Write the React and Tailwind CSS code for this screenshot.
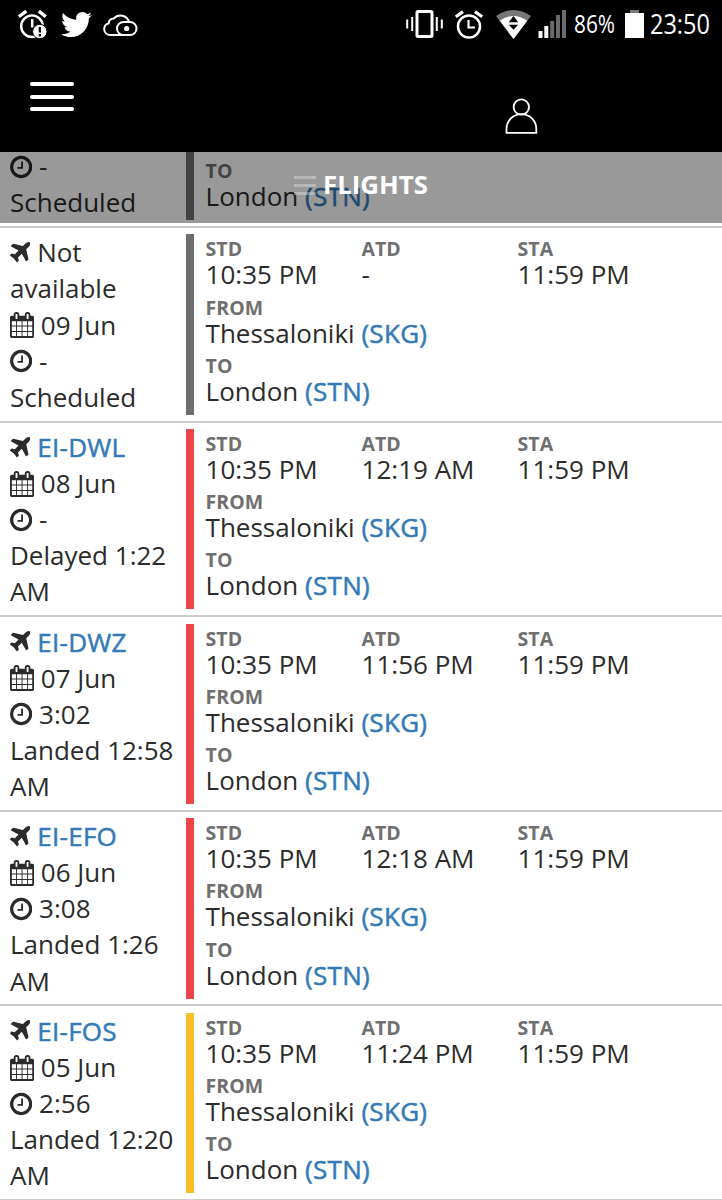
import React from 'react';
import { FaTwitter } from 'react-icons/fa';

const flights = [
  { id: 2, date: '09 Jun', duration: '-', status: 'Scheduled', std: '10:35 PM', atd: '-', sta: '11:59 PM', bar: 'bg-[#6d6d6d]' },
  { id: 3, plane: 'EI-DWL', date: '08 Jun', duration: '-', status: 'Delayed 1:22 AM', std: '10:35 PM', atd: '12:19 AM', sta: '11:59 PM', bar: 'bg-[#ee4647]' },
  { id: 4, plane: 'EI-DWZ', date: '07 Jun', duration: '3:02', status: 'Landed 12:58 AM', std: '10:35 PM', atd: '11:56 PM', sta: '11:59 PM', bar: 'bg-[#ee4647]' },
  { id: 5, plane: 'EI-EFO', date: '06 Jun', duration: '3:08', status: 'Landed 1:26 AM', std: '10:35 PM', atd: '12:18 AM', sta: '11:59 PM', bar: 'bg-[#ee4647]' },
  { id: 6, plane: 'EI-FOS', date: '05 Jun', duration: '2:56', status: 'Landed 12:20 AM', std: '10:35 PM', atd: '11:24 PM', sta: '11:59 PM', bar: 'bg-[#f7bf26]' },
];

const PlaneIcon = () => (
  <svg className="inline h-[26px] w-[20.4px] align-[-3.7px]" viewBox="192 0 1408 1792" fill="currentColor">
    <path d="M1568 160q44 52 12 148t-108 172l-161 161 160 696q5 19-12 33l-128 96q-7 6-19 6-4 0-7-1-15-3-21-16l-279-508-259 259 53 194q5 17-8 31l-96 96q-9 9-23 9h-2q-15-2-24-13l-189-252-252-189q-11-7-13-23-1-13 9-25l96-97q9-9 23-9 6 0 8 1l194 53 259-259-508-279q-14-8-17-24-2-16 9-27l128-128q14-13 30-8l665 159 160-160q76-76 172-108t148 12z" />
  </svg>
);

const CalendarIcon = () => (
  <svg className="inline h-[26px] w-[24.1px] align-[-3.7px]" viewBox="64 0 1664 1792" fill="currentColor">
    <path d="M192 1664h288v-288h-288v288zm352 0h320v-288h-320v288zm-352-352h288v-320h-288v320zm352 0h320v-320h-320v320zm-352-384h288v-288h-288v288zm736 736h320v-288h-320v288zm-384-736h320v-288h-320v288zm768 736h288v-288h-288v288zm-384-352h320v-320h-320v320zm-352-864v-288q0-13-9.5-22.5t-22.5-9.5h-64q-13 0-22.5 9.5t-9.5 22.5v288q0 13 9.5 22.5t22.5 9.5h64q13 0 22.5-9.5t9.5-22.5zm736 864h288v-320h-288v320zm-384-384h320v-288h-320v288zm384 0h288v-288h-288v288zm32-480v-288q0-13-9.5-22.5t-22.5-9.5h-64q-13 0-22.5 9.5t-9.5 22.5v288q0 13 9.5 22.5t22.5 9.5h64q13 0 22.5-9.5t9.5-22.5zm384-64v1280q0 52-38 90t-90 38h-1408q-52 0-90-38t-38-90v-1280q0-52 38-90t90-38h128v-96q0-66 47-113t113-47h64q66 0 113 47t47 113v96h384v-96q0-66 47-113t113-47h64q66 0 113 47t47 113v96h128q52 0 90 38t38 90z" />
  </svg>
);

const ClockIcon = () => (
  <svg className="inline h-[26px] w-[22.3px] align-[-3.7px]" viewBox="128 0 1536 1792" fill="currentColor">
    <path d="M1024 544v448q0 14-9 23t-23 9h-320q-14 0-23-9t-9-23v-64q0-14 9-23t23-9h224v-352q0-14 9-23t23-9h64q14 0 23 9t9 23zm416 352q0-148-73-273t-198-198-273-73-273 73-198 198-73 273 73 273 198 198 273 73 273-73 198-198 73-273zm224 0q0 209-103 385.5t-279.5 279.5-385.5 103-385.5-103-279.5-279.5-103-385.5 103-385.5 279.5-279.5 385.5-103 385.5 103 279.5 279.5 103 385.5z" />
  </svg>
);

const StatusBar = () => (
  <div className="flex h-[50px] items-center text-white">
    {/* missed alarm */}
    <svg className="ml-[18px] h-[30px] w-[30px] shrink-0" viewBox="0 0 30 30" fill="none" stroke="currentColor">
      <path d="M.8 6.7 8.3 1.2M20.8 1.2l7 5.5" strokeWidth="3.4" />
      <circle cx="14" cy="16.2" r="10.8" strokeWidth="2.4" />
      <path d="M14.2 9v8.5" strokeWidth="2.6" />
      <circle cx="21.8" cy="21.5" r="7.2" fill="currentColor" stroke="black" strokeWidth="1" />
      <path d="M21.8 17v5.5M21.8 24v2.4" stroke="black" strokeWidth="2.2" />
    </svg>
    <FaTwitter className="ml-[13px] mt-[-2px] h-[31px] w-[31px] shrink-0" />
    <svg className="ml-[11px] mt-[-1px] h-[24px] w-[35px] shrink-0" viewBox="0 0 35 24" fill="none" stroke="currentColor" strokeWidth="2">
      <path d="M17 22H7.2a6 6 0 0 1-1.5-11.8 4.8 4.8 0 0 1 5-4.7A9 9 0 0 1 26 8.7" />
      <rect x="14" y="9" width="19.5" height="13" rx="6.5" />
      <path d="M7 22h20" />
      <circle cx="23.7" cy="15.5" r="2.6" fill="currentColor" stroke="none" />
    </svg>

    {/* vibrate */}
    <svg className="ml-auto mt-[-2px] h-[28px] w-[37px] shrink-0" viewBox="0 0 37 28" fill="none" stroke="currentColor">
      <rect x="11" y="1.5" width="15" height="25" rx="1" strokeWidth="3" />
      <path d="M6.2 7v14M30.8 7v14" strokeWidth="2" />
      <path d="M1.2 9.5v9M35.8 9.5v9" strokeWidth="2" />
    </svg>
    <svg className="ml-[12px] mt-[-2px] h-[29px] w-[28px] shrink-0" viewBox="0 0 28 29" fill="none" stroke="currentColor">
      <path d="M.8 6.8 8 1.6M20 1.6l7.2 5.2" strokeWidth="3.2" />
      <circle cx="14" cy="16.5" r="11" strokeWidth="2.5" />
      <path d="M13.5 10v7.5H20" strokeWidth="2.2" />
    </svg>
    {/* wifi */}
    <svg className="ml-[13px] mt-[-2px] h-[29px] w-[35px] shrink-0" viewBox="0 0 35 29">
      <path d="M0 6q17.5-12 35 0L17.5 29z" fill="#777" />
      <path d="M3.8 10.8q13.7-9.5 27.4 0L17.5 29z" fill="white" />
      <path d="M12.8 12.2h9.4L17.5 6zM12.8 14.8h9.4l-4.7 5z" fill="black" />
    </svg>
    <svg className="ml-[7px] mt-[-2px] h-[28px] w-[29px] shrink-0" viewBox="0 0 29 28">
      <path d="M.5 21h4v7h-4zM6.3 16h4v12h-4z" fill="white" />
      <path d="M12.2 11h4v17h-4zM18 5h4v23h-4zM24 0h4v28h-4z" fill="#6b6b6b" />
    </svg>
    <div className="ml-[7px] mt-[-4px] w-[43px] shrink-0">
      <span className="block w-max origin-left scale-x-[0.8] font-['Open_Sans',sans-serif] text-[26px] leading-none">86%</span>
    </div>
    <svg className="ml-[8px] mt-[-2px] h-[28px] w-[19px] shrink-0" viewBox="0 0 19 28">
      <path d="M5 0h9v3H5z" fill="#777" />
      <path d="M0 3h19v25H0z" fill="white" />
    </svg>
    <div className="ml-[6px] mr-[11px] mt-[-3px] w-[61px] shrink-0">
      <span className="block w-max origin-left scale-x-[0.87] font-['Open_Sans',sans-serif] text-[27px] leading-none">23:50</span>
    </div>
  </div>
);

const Header = () => (
  <header className="h-[152px] shrink-0 bg-black">
    <StatusBar />
    <div className="flex justify-between pl-[30px] pr-[184px]">
      <button className="mt-[32px] flex h-[29px] w-[44px] flex-col justify-between">
        <span className="h-1 w-full rounded-full bg-white" />
        <span className="h-1 w-full rounded-full bg-white" />
        <span className="h-1 w-full rounded-full bg-white" />
      </button>
      <svg className="mt-[48px] h-[37px] w-[33px]" viewBox="0 0 33 37" fill="none" stroke="white" strokeWidth="1.8">
        <circle cx="16.3" cy="9" r="7.7" />
        <path d="M1.5 34.8V31a14.8 14.8 0 0 1 29.8 0v3.8z" />
      </svg>
    </div>
  </header>
);

const Code = ({ children }) => (
  <a className="tracking-[0.3px] text-[#337ab7] [-webkit-text-stroke:0.5px_#337ab7]">{children}</a>
);

const Field = ({ label, children }) => (
  <div className="w-[156px]">
    <div className="text-[19.5px] font-bold leading-[22px] text-[#6f6f6f]">{label}</div>
    <div className="whitespace-nowrap leading-[28.6px]">{children}</div>
  </div>
);

const FlightRow = ({ flight }) => (
  <div className="flex h-[194.6px] border-t-2 border-[#cccccc] pt-[6.3px]">
    <div className="w-[186.3px] shrink-0 pl-[10px] leading-[36.1px]">
      <div>
        <PlaneIcon /> {flight.plane ? <Code>{flight.plane}</Code> : 'Not available'}
      </div>
      <div><CalendarIcon /> {flight.date}</div>
      <div><ClockIcon /> {flight.duration}</div>
      <div>{flight.status}</div>
    </div>
    <div className={`h-[180.5px] w-2 shrink-0 ${flight.bar}`} />
    <div className="flex flex-col gap-[7.6px] pl-[11.3px] pt-[4px]">
      <div className="flex">
        <Field label="STD">{flight.std}</Field>
        <Field label="ATD">{flight.atd}</Field>
        <Field label="STA">{flight.sta}</Field>
      </div>
      <Field label="FROM">Thessaloniki <Code>(SKG)</Code></Field>
      <Field label="TO">London <Code>(STN)</Code></Field>
    </div>
  </div>
);

const App = () => {
  return (
    <div className="flex h-[1200px] w-[722px] flex-col overflow-hidden bg-white font-['Open_Sans',sans-serif] text-[26px] text-[#2b2b2b]">
      <Header />

      <main className="relative flex-1 overflow-hidden">
        {/* tail of the row that is scrolled under the title */}
        <div className="flex h-[74.1px]">
          <div className="w-[186.3px] shrink-0 pl-[10px] pt-[-4px] leading-[36.1px]">
            <div className="-mt-[4px]"><ClockIcon /> -</div>
            <div>Scheduled</div>
          </div>
          <div className="h-[67.8px] w-2 shrink-0 bg-[#6d6d6d]" />
          <div className="pl-[11.3px] pt-[8px]">
            <Field label="TO">London <Code>(STN)</Code></Field>
          </div>
        </div>
        <div className="border-b-2 border-[#cccccc]">
          {flights.map((flight) => (
            <FlightRow key={flight.id} flight={flight} />
          ))}
        </div>

        {/* title floats over the scrolled list */}
        <div className="absolute inset-x-0 top-0 flex h-[70.5px] items-center justify-center gap-[7px] bg-black/40 pb-[4px]">
          <div className="flex h-[19px] w-[22px] flex-col justify-between">
            <span className="h-[3px] bg-white/30" />
            <span className="h-[3px] bg-white/30" />
            <span className="h-[3px] bg-white/30" />
          </div>
          <h1 className="text-[25.8px] font-bold leading-none text-white">FLIGHTS</h1>
        </div>
      </main>
    </div>
  );
};

export default App;
